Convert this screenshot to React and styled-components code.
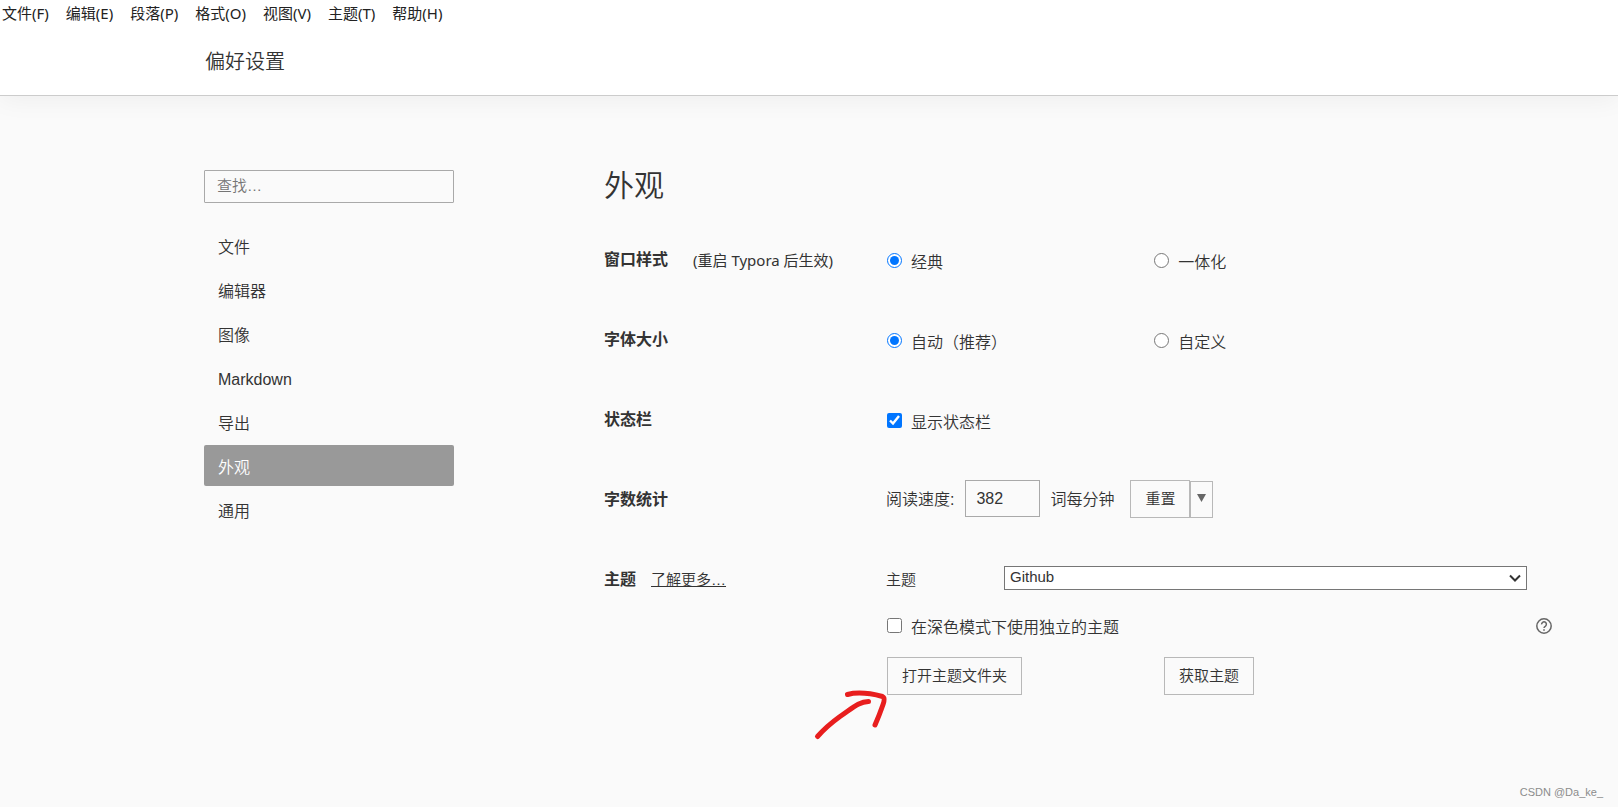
import React, { useState } from 'react'
import styled, { createGlobalStyle } from 'styled-components';

const GlobalStyle = createGlobalStyle`
  * {
    box-sizing: border-box;
  }
  body {
    margin: 0;
    background: #fafafa;
    color: #333;
    font-family: "Liberation Sans", "Noto Sans CJK SC", sans-serif;
    font-size: 16px;
    font-weight: 350;
    line-height: 24px;
  }
  button, input, select {
    font-family: inherit;
    font-weight: inherit;
    color: inherit;
  }
`;

const Page = styled.div`
  display: flex;
  flex-direction: column;
  min-height: 100vh;
`;

const Top = styled.div`
  background: #fff;
  border-bottom: 1px solid #ccc;
  box-shadow: 0 4px 24px rgba(0, 0, 0, 0.05);
`;

const MenuBar = styled.nav`
  display: flex;
  gap: 17px;
  padding: 1px 2px 0;
`;

const MenuItem = styled.button`
  padding: 0;
  border: none;
  background: none;
  color: #222;
  font-family: "Noto Sans", "Noto Sans CJK SC", sans-serif;
  font-size: 15px;
  font-weight: 400;
  line-height: 24px;
`;

const Title = styled.h1`
  margin: 0;
  padding: 23px 0 19px 205px;
  font-size: 20px;
  font-weight: inherit;
  line-height: 28px;
`;

const Main = styled.main`
  flex: 1;
  display: flex;
  gap: 150px;
  padding: 74px 64px 0 204px;
`;

const Sidebar = styled.aside`
  flex: 0 0 250px;
`;

const SearchBox = styled.input`
  display: block;
  width: 100%;
  height: 33px;
  padding: 0 12px 2px;
  border: 1px solid #a9a9a9;
  border-radius: 1px;
  background: transparent;
  font-size: 15px;
  outline: none;
  &::placeholder {
    color: #757575;
  }
`;

const NavList = styled.nav`
  display: flex;
  flex-direction: column;
  gap: 3px;
  margin-top: 22px;
`;

const NavLink = styled.a`
  padding: 11px 14px 6px;
  border-radius: 2px;
  color: ${(p) => (p.$active ? '#fff' : '#333')};
  background: ${(p) => (p.$active ? '#999' : 'transparent')};
  text-decoration: none;
`;

const Panel = styled.section`
  flex: 1;
  min-width: 0;
`;

const PanelTitle = styled.h2`
  margin: 0;
  padding: 0 0 38px;
  font-size: 30px;
  font-weight: inherit;
  line-height: 32px;
`;

const Row = styled.div`
  display: flex;
  min-height: 80px;
`;

const RowHead = styled.div`
  flex: 0 0 282px;
  display: flex;
  align-items: center;
  height: 40px;
  gap: ${(p) => p.$gap || 15}px;
`;

const RowLabel = styled.h3`
  margin: 0;
  font-size: 16px;
  font-weight: 700;
`;

const Note = styled.span`
  font-family: "Noto Sans", "Noto Sans CJK SC", sans-serif;
  font-size: 15px;
  font-weight: 400;
`;

const MoreLink = styled.a`
  color: inherit;
  font-size: 15px;
`;

const RowBody = styled.div`
  flex: 1;
  min-width: 0;
`;

const Line = styled.div`
  display: flex;
  align-items: center;
  height: ${(p) => p.$height || 40}px;
`;

const Cell = styled.div`
  flex: 0 0 40%;
`;

const Check = styled.label`
  display: flex;
  align-items: center;
  gap: 9px;
  padding-top: 6px;
`;

const Tick = styled.input`
  width: 15px;
  height: 15px;
  margin: 0 0 6px 1px;
  accent-color: #0075ff;
`;

const SpeedInput = styled.input`
  width: 75px;
  height: 37px;
  margin: 0 10px 3px 11px;
  padding: 0 10px;
  border: 1px solid #a9a9a9;
  background: transparent;
  font-size: 16px;
`;

const Button = styled.button`
  height: 38px;
  padding: 0 14px 4px;
  border: 1px solid #b8b8b8;
  background: transparent;
  font-size: 15px;
`;

const ResetGroup = styled.div`
  display: flex;
  align-items: flex-end;
  margin: 0 0 2px 16px;
`;

const DropButton = styled.button`
  display: flex;
  align-items: center;
  justify-content: center;
  width: 23px;
  height: 37px;
  padding: 0 0 4px;
  border: 1px solid #b8b8b8;
  background: transparent;
`;

const ThemeLabel = styled.label`
  flex: 0 0 118px;
  font-size: 15px;
`;

const SelectWrap = styled.div`
  flex: 1;
  display: grid;
  align-items: center;
  margin-right: 27px;
  padding-bottom: 4px;
  & > * {
    grid-area: 1 / 1;
  }
  svg {
    justify-self: end;
    margin-right: 6px;
    pointer-events: none;
  }
`;

const Select = styled.select`
  appearance: none;
  width: 100%;
  height: 24px;
  padding: 0 6px 3px 5px;
  border: 1px solid #767676;
  border-radius: 0;
  background: #fff;
  font-size: 15px;
`;

const HelpButton = styled.button`
  display: flex;
  margin: 0 2px 0 auto;
  padding: 2px 0 0;
  border: none;
  background: none;
`;

const ButtonLine = styled.div`
  position: relative;
  display: flex;
  margin: 7px 0 0 1px;
`;

const ButtonCell = styled.div`
  flex: 0 0 277px;
`;

// hand drawn arrow pointing at the theme folder button
const Arrow = styled.svg`
  position: absolute;
  left: -74px;
  top: 30px;
  pointer-events: none;
`;

const Footer = styled.footer`
  padding: 0 15px 6px;
  color: #8c8c8c;
  font-size: 11px;
  line-height: 18px;
  text-align: right;
`;

const menus = ['文件(F)', '编辑(E)', '段落(P)', '格式(O)', '视图(V)', '主题(T)', '帮助(H)'];
const sections = ['文件', '编辑器', '图像', 'Markdown', '导出', '外观', '通用'];

const Option = ({ type = 'radio', children, ...rest }) => (
  <Check>
    <Tick type={type} {...rest} />
    {children}
  </Check>
);

export default function App() {
  const [active, setActive] = useState('外观');
  const [frame, setFrame] = useState('classic');
  const [size, setSize] = useState('auto');

  return (
    <Page>
      <GlobalStyle />
      <Top>
        <MenuBar>
          {menus.map((m) => <MenuItem key={m}>{m}</MenuItem>)}
        </MenuBar>
        <Title>偏好设置</Title>
      </Top>

      <Main>
        <Sidebar>
          <SearchBox type="text" placeholder="查找…" aria-label="查找" />
          <NavList>
            {sections.map((s) => (
              <NavLink key={s} href="#" $active={s === active} onClick={() => setActive(s)}>{s}</NavLink>
            ))}
          </NavList>
        </Sidebar>

        <Panel>
          <PanelTitle>外观</PanelTitle>

          <Row>
            <RowHead $gap={25}>
              <RowLabel>窗口样式</RowLabel>
              <Note>(重启 Typora 后生效)</Note>
            </RowHead>
            <RowBody>
              <Line>
                <Cell>
                  <Option name="frame" checked={frame === 'classic'} onChange={() => setFrame('classic')}>经典</Option>
                </Cell>
                <Option name="frame" checked={frame === 'unibody'} onChange={() => setFrame('unibody')}>一体化</Option>
              </Line>
            </RowBody>
          </Row>

          <Row>
            <RowHead><RowLabel>字体大小</RowLabel></RowHead>
            <RowBody>
              <Line>
                <Cell>
                  <Option name="size" checked={size === 'auto'} onChange={() => setSize('auto')}>自动（推荐）</Option>
                </Cell>
                <Option name="size" checked={size === 'custom'} onChange={() => setSize('custom')}>自定义</Option>
              </Line>
            </RowBody>
          </Row>

          <Row>
            <RowHead><RowLabel>状态栏</RowLabel></RowHead>
            <RowBody>
              <Line>
                <Option type="checkbox" defaultChecked>显示状态栏</Option>
              </Line>
            </RowBody>
          </Row>

          <Row>
            <RowHead><RowLabel>字数统计</RowLabel></RowHead>
            <RowBody>
              <Line>
                <label htmlFor="speed">阅读速度:</label>
                <SpeedInput id="speed" type="text" defaultValue="382" />
                <span>词每分钟</span>
                <ResetGroup>
                  <Button>重置</Button>
                  <DropButton aria-label="更多">
                    <svg width="9" height="8" viewBox="0 0 9 8"><path d="M0 0h9L4.500 8z" fill="#666" /></svg>
                  </DropButton>
                </ResetGroup>
              </Line>
            </RowBody>
          </Row>

          <Row>
            <RowHead>
              <RowLabel>主题</RowLabel>
              <MoreLink href="#">了解更多…</MoreLink>
            </RowHead>
            <RowBody>
              <Line>
                <ThemeLabel htmlFor="theme">主题</ThemeLabel>
                <SelectWrap>
                  <Select id="theme" defaultValue="Github">
                    <option>Github</option>
                  </Select>
                  <svg width="12" height="8" viewBox="0 0 12 8" fill="none">
                    <path d="M1 1.500l5 5 5-5" stroke="#333" strokeWidth="2" />
                  </svg>
                </SelectWrap>
              </Line>
              <Line $height={50}>
                <Option type="checkbox">在深色模式下使用独立的主题</Option>
                <HelpButton aria-label="帮助">
                  <svg width="16" height="16" viewBox="0 0 16 16" fill="none" stroke="#666">
                    <circle cx="8" cy="8" r="7.200" strokeWidth="1.500" />
                    <path d="M5.600 6.400a2.400 2.400 0 1 1 3.900 1.700C8.600 8.700 8 9.100 8 10.100" strokeWidth="1.500" />
                    <path d="M8 11.200v1.600" strokeWidth="1.600" />
                  </svg>
                </HelpButton>
              </Line>
              <ButtonLine>
                <ButtonCell><Button>打开主题文件夹</Button></ButtonCell>
                <Button>获取主题</Button>
                <Arrow width="76" height="56" viewBox="0 0 76 56" fill="none" stroke="#e81e1e" strokeWidth="5" strokeLinecap="round" strokeLinejoin="round">
                  <path d="M4.500 49.500C12 41 18 36 27 29.500C39 21.500 46 14.500 55.500 14.500" />
                  <path d="M34.500 7.500C46 4.500 58 6.500 69.500 9.500C73 11 70 18 68 23C66 29 64 33 62 38" />
                </Arrow>
              </ButtonLine>
            </RowBody>
          </Row>
        </Panel>
      </Main>

      <Footer>CSDN @Da_ke_</Footer>
    </Page>
  )
}
